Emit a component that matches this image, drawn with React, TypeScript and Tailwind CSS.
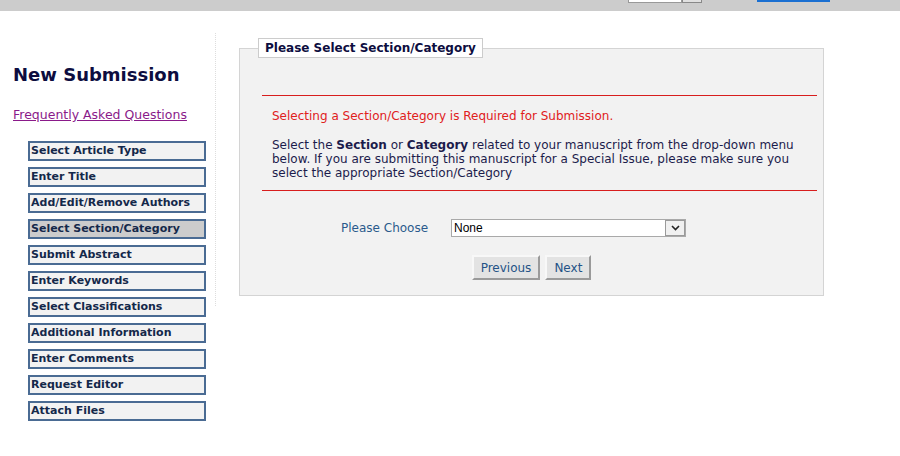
import React from "react";

const steps = [
  "Select Article Type",
  "Enter Title",
  "Add/Edit/Remove Authors",
  "Select Section/Category",
  "Submit Abstract",
  "Enter Keywords",
  "Select Classifications",
  "Additional Information",
  "Enter Comments",
  "Request Editor",
  "Attach Files",
];

const active = "Select Section/Category";

export default function App() {
  return (
    <div className="w-[900px] h-[456px] bg-white overflow-hidden font-['DejaVu_Sans',Verdana,sans-serif]">
      {/* top toolbar strip */}
      <div className="h-[11px] bg-[#cccccc] flex items-start">
        <div className="ml-[628px] mt-[-14px] flex">
          <div className="w-[54px] h-[17px] bg-white border border-[#999]" />
          <div className="w-[20px] h-[17px] bg-[#e0e0e0] border border-[#888]" />
        </div>
        <div className="ml-[55px] w-[73px] h-[2px] bg-[#1a6fd1]" />
      </div>

      <div className="flex pt-[22px]">
        {/* left column */}
        <div className="w-[215px] shrink-0">
          <h1 className="ml-[13px] mt-[31px] text-[18px] leading-[22px] font-bold text-[#0d0d40]">
            New Submission
          </h1>
          <a
            href="#"
            className="block ml-[13px] mt-[21px] text-[12.5px] leading-[16px] text-[#8a1a8a] underline"
          >
            Frequently Asked Questions
          </a>
          <div className="ml-[28px] mt-[18px] flex flex-col gap-[6px]">
            {steps.map((s) => (
              <div
                key={s}
                className={`w-[178px] h-[20px] border-2 border-[#4a6b93] px-[1px] text-[11px] leading-[16px] font-bold text-[#14284a] whitespace-nowrap ${
                  s === active ? "bg-[#cccccc]" : "bg-[#f2f2f2]"
                }`}
              >
                {s}
              </div>
            ))}
          </div>
        </div>

        {/* main content */}
        <div className="self-start border-l border-dotted border-[#dddddd] pl-[23px] pt-[5px] pb-[10px]">
          <fieldset className="w-[585px] border border-[#d4d4d4] bg-[#f2f2f2]">
            <legend className="ml-[18px] bg-white border border-[#cccccc] px-[6px] h-[20px] text-[12px] leading-[18px] font-bold text-[#0d0d40]">
              Please Select Section/Category
            </legend>
            <div className="ml-[22px] mr-[6px] mt-[37px] border-t border-[#d81e1e]" />
            <div className="ml-[32px] mr-[20px] pt-[13px] text-[12px] leading-[14px]">
              <p className="text-[#e0201c]">
                Selecting a Section/Category is Required for Submission.
              </p>
              <p className="mt-[15px] text-[#1c1c4c]">
                Select the <b>Section</b> or <b>Category</b> related to your
                manuscript from the drop-down menu below. If you are submitting
                this manuscript for a Special Issue, please make sure you select
                the appropriate Section/Category
              </p>
            </div>
            <div className="ml-[22px] mr-[6px] mt-[10px] border-t border-[#d81e1e]" />

            <div className="flex items-center mt-[28px] pl-[101px]">
              <span className="w-[110px] text-[12px] leading-[14px] text-[#2a5a8c]">
                Please Choose
              </span>
              <div className="w-[235px] h-[18px] flex items-center bg-white border border-[#a9a9a9]">
                <span className="flex-1 pl-[2px] text-[12px] leading-[14px] text-black font-['Liberation_Sans',Arial,sans-serif]">
                  None
                </span>
                <div className="w-[20px] h-[16px] flex items-center justify-center bg-[#f0f0f0] border border-[#9a9a9a]">
                  <svg width="9" height="6" viewBox="0 0 9 6">
                    <path d="M1 1l3.5 3.5L8 1" stroke="#222" strokeWidth="1.6" fill="none" />
                  </svg>
                </div>
              </div>
            </div>

            <div className="flex justify-center gap-[5px] mt-[18px] mb-[15px]">
              <button className="h-[25px] px-[7px] bg-[#e3e3e3] border-2 border-t-[#f8f8f8] border-l-[#f8f8f8] border-r-[#9a9a9a] border-b-[#9a9a9a] text-[12px] text-[#245286]">
                Previous
              </button>
              <button className="h-[25px] px-[7px] bg-[#e3e3e3] border-2 border-t-[#f8f8f8] border-l-[#f8f8f8] border-r-[#9a9a9a] border-b-[#9a9a9a] text-[12px] text-[#245286]">
                Next
              </button>
            </div>
          </fieldset>
        </div>
      </div>
    </div>
  );
}
